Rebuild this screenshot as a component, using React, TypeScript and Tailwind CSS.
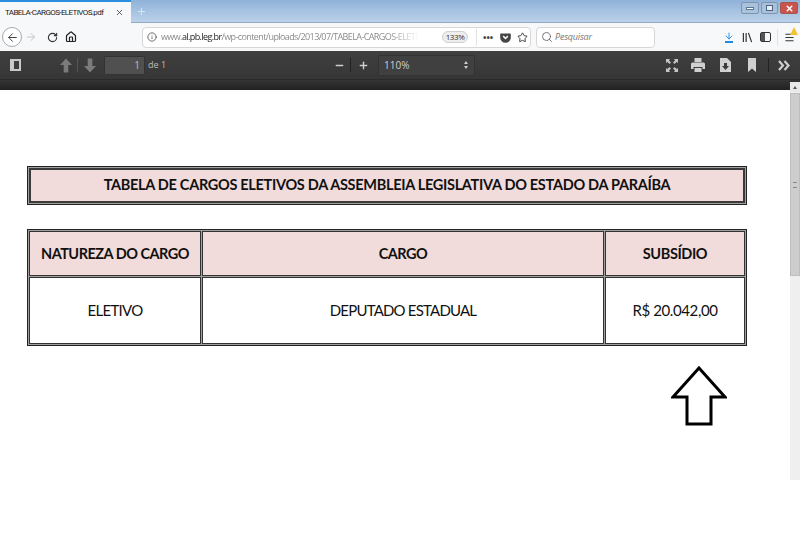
import { ArrowLeft, ArrowRight, RotateCw, Home, Info, Star, Search, Menu, Minus, Plus, X } from 'lucide-react';

const cellText = "font-['Lato','Liberation_Sans',sans-serif] text-[#111]";
const headCell = 'border border-[#333] bg-[#f2dcdb] flex items-center justify-center text-[14.5px] font-bold whitespace-nowrap';
const bodyCell = 'border border-[#333] bg-white flex items-center justify-center text-[15px] whitespace-nowrap';

function WindowButtons() {
  return (
    <div className="flex h-[12px] mt-[2px] gap-[2px]">
      <div className="w-[18px] rounded-[2px] flex items-center justify-center bg-[#a8c1dd] border border-[#7f93ab]">
        <div className="w-[8px] h-[3px] bg-white border border-[#5f7590]" />
      </div>
      <div className="w-[17px] rounded-[2px] flex items-center justify-center bg-[#a8c1dd] border border-[#7f93ab]">
        <div className="w-[7px] h-[6px] bg-white/70 border border-[#4f647d]" />
      </div>
      <div className="w-[18px] rounded-[2px] flex items-center justify-center bg-[#c9544c] border border-[#a9544c]">
        <X className="w-[9px] h-[9px] text-white" strokeWidth={4} />
      </div>
    </div>
  );
}

function TabStrip() {
  return (
    <div className="h-[23px] flex bg-gradient-to-b from-[#8fb2d8] to-[#bcd2ea] border-b border-[#93a9c2]">
      <div className="w-[131px] h-[23px] bg-[#f7f8fa] border-t-2 border-[#2a8fe0] flex items-center pl-[5px] pr-[7px] text-[#222]">
        <span className="font-['Roboto',sans-serif] text-[8px] tracking-[-0.6px] flex-1 whitespace-nowrap">TABELA-CARGOS-ELETIVOS.pdf</span>
        <X className="w-[9px] h-[9px] shrink-0 text-[#333]" strokeWidth={2} />
      </div>
      <div className="w-[20px] flex items-center justify-center">
        <Plus className="w-[11px] h-[11px] text-[#dbe7f3]" strokeWidth={2} />
      </div>
      <div className="flex-1" />
      <div className="pr-[2px]">
        <WindowButtons />
      </div>
    </div>
  );
}

function NavBar() {
  return (
    <div className="h-[28px] bg-[#f7f8fa] flex items-center font-['Open_Sans',sans-serif]">
      <div className="ml-[2px] w-[20px] h-[20px] rounded-full border border-[#a9a9a9] bg-white flex items-center justify-center">
        <ArrowLeft className="w-[13px] h-[13px] text-[#333]" strokeWidth={1.7} />
      </div>
      <ArrowRight className="ml-[3px] w-[12px] h-[12px] text-[#b5b5b5]" strokeWidth={1.5} />
      <RotateCw className="ml-[10px] w-[11px] h-[11px] text-[#333]" strokeWidth={2.4} />
      <Home className="ml-[7px] w-[12px] h-[12px] text-[#222]" strokeWidth={2.4} />
      <div className="ml-[65px] w-[389px] h-[21px] bg-white border border-[#d7d7d7] rounded-sm flex items-center pl-[4px]">
        <Info className="w-[10px] h-[10px] text-[#555]" />
        <span className="ml-[4px] w-[258px] overflow-hidden whitespace-nowrap text-[9px] tracking-[-0.6px] text-[#8a8a8a] [mask-image:linear-gradient(to_right,black_88%,transparent)]">
          www.<span className="text-[#222]">al.pb.leg.br</span>/wp-content/uploads/2013/07/TABELA-CARGOS-ELETIV
        </span>
        <span className="ml-[23px] w-[26px] h-[12px] rounded-full border border-[#cfcfcf] bg-[#eeeeee] text-[8px] tracking-[-0.4px] leading-[10px] text-center text-[#333]">133%</span>
        <div className="ml-[8px] w-px h-[17px] bg-[#e2e2e2]" />
        <span className="ml-[6px] text-[9px] leading-none font-bold text-[#444]">•••</span>
        <svg className="ml-[7px] w-[11px] h-[11px]" viewBox="0 0 12 12">
          <path d="M1 1.5h10a.8.8 0 0 1 .8.8V6a5.8 5.6 0 0 1-11.600 0V2.300a.8.8 0 0 1 .8-.8z" fill="#444" />
          <path d="M3.500 4.500L6 7l2.500-2.500" fill="none" stroke="#fff" strokeWidth="1.600" />
        </svg>
        <Star className="ml-[6px] w-[11px] h-[11px] text-[#333]" strokeWidth={2} />
      </div>
      <div className="ml-[5px] w-[119px] h-[21px] bg-white border border-[#d7d7d7] rounded-sm flex items-center pl-[4px]">
        <Search className="w-[12px] h-[12px] text-[#777]" />
        <span className="ml-[2px] text-[9px] tracking-[-0.2px] italic text-[#777]">Pesquisar</span>
      </div>
      <div className="ml-[69px] flex flex-col items-center w-[10px] text-[#1f8ade]">
        <ArrowRight className="w-[10px] h-[10px] rotate-90" strokeWidth={2.2} />
        <div className="w-[8px] h-[1.5px] bg-[#1f8ade]" />
      </div>
      <svg className="ml-[8px] w-[11px] h-[11px]" viewBox="0 0 12 12" fill="none" stroke="#333" strokeWidth="1.300">
        <path d="M1.500 1v10M4.500 1v10M7 1l3.500 10" />
      </svg>
      <div className="ml-[7px] w-[11px] h-[10px] rounded-[2px] border border-[#333] flex">
        <div className="w-[4px] bg-[#555]" />
      </div>
      <div className="ml-[6px] w-px h-[17px] bg-[#e2e2e2]" />
      <div className="relative ml-[6px]">
        <Menu className="w-[11px] h-[11px] text-[#333]" strokeWidth={2.4} />
        <svg className="absolute -top-[5px] left-[6px] w-[8px] h-[8px]" viewBox="0 0 8 8">
          <path d="M4 0l4 8H0z" fill="#f2c230" />
        </svg>
      </div>
    </div>
  );
}

function PdfToolbar() {
  const gray = 'text-[#d0d0d0]';
  return (
    <div className="h-[39px] flex flex-col shrink-0 font-['Open_Sans',sans-serif]">
      <div className="h-[29px] flex items-center bg-gradient-to-b from-[#404040] to-[#363636] border-b border-[#2a2a2a]">
        <div className="ml-[10px] w-[11px] h-[12px] border-2 border-[#c8c8c8] border-l-[4px]" />
        <svg className="ml-[39px] w-[12px] h-[15px]" viewBox="0 0 13 15"><path d="M6.500 0L13 7H9v8H4V7H0z" fill="#7b7b7b" /></svg>
        <div className="ml-[5px] w-px h-[14px] bg-[#555]" />
        <svg className="ml-[6px] w-[12px] h-[15px]" viewBox="0 0 13 15"><path d="M6.500 15L13 8H9V0H4v8H0z" fill="#7b7b7b" /></svg>
        <div className="ml-[8px] w-[41px] h-[19px] bg-[#505050] border border-[#333] rounded-[1px] flex items-center justify-end pr-[4px] text-[10px] text-[#bdbdbd]">1</div>
        <span className="ml-[3px] text-[9px] text-[#bdbdbd]">de 1</span>
        <Minus className={`ml-[168px] w-[11px] h-[11px] ${gray}`} strokeWidth={3} />
        <div className="ml-[5px] w-px h-[14px] bg-[#222]" />
        <Plus className={`ml-[7px] w-[11px] h-[11px] ${gray}`} strokeWidth={3} />
        <div className="ml-[9px] w-[97px] h-[21px] bg-[#404040] border border-[#333] rounded-[1px] flex items-center justify-between pl-[5px] pr-[6px] text-[10px] text-[#cfcfcf]">
          <span>110%</span>
          <span className="flex flex-col gap-[2px]">
            <span className="w-0 h-0 border-x-[2px] border-x-transparent border-b-[3px] border-b-[#ccc]" />
            <span className="w-0 h-0 border-x-[2px] border-x-transparent border-t-[3px] border-t-[#ccc]" />
          </span>
        </div>
        <div className="flex-1" />
        <svg className="w-[12px] h-[13px]" viewBox="0 0 12 13" fill="#c4c4c4">
          <path d="M0 0h4L3 1.500 5 3.500 3.500 5 1.500 3 0 4z" />
          <path d="M12 0H8l1 1.500-2 2L8.500 5l2-2L12 4z" />
          <path d="M0 13H4L3 11.500 5 9.500 3.500 8l-2 2L0 9z" />
          <path d="M12 13H8l1-1.500-2-2L8.500 8l2 2L12 9z" />
        </svg>
        <svg className="ml-[13px] w-[14px] h-[14px]" viewBox="0 0 14 14">
          <path d="M3.500 0h7v4h-7z" fill="#d0d0d0" />
          <path d="M1.500 4.500h11A1.500 1.500 0 0 1 14 6v5h-2.500V9h-9v2H0V6a1.500 1.500 0 0 1 1.500-1.500z" fill="#d0d0d0" />
          <path d="M3.500 10h7v4h-7z" fill="#d0d0d0" />
        </svg>
        <svg className="ml-[15px] w-[11px] h-[14px]" viewBox="0 0 11 14">
          <path d="M0 0h7l4 4v10H0z" fill="#d0d0d0" />
          <path d="M4 5h3v3h2l-3.500 4L2 8h2z" fill="#3a3a3a" />
        </svg>
        <svg className="ml-[17px] w-[8px] h-[14px]" viewBox="0 0 8 14"><path d="M0 0h8v14L4 10.500 0 14z" fill="#d0d0d0" /></svg>
        <div className="ml-[12px] w-px h-[14px] bg-[#222]" />
        <svg className="ml-[9px] mr-[10px] w-[12px] h-[11px]" viewBox="0 0 12 11" fill="none" stroke="#d0d0d0" strokeWidth="2.200">
          <path d="M1 1l4 4.500L1 10M6.500 1l4 4.500-4 4.500" />
        </svg>
      </div>
      <div className="flex-1 bg-gradient-to-b from-[#343434] to-[#222222]" />
    </div>
  );
}

function Scrollbar() {
  return (
    <div className="w-[10px] h-[398px] -mt-[8px] relative shrink-0 bg-[#efefef] flex flex-col">
      <div className="h-[10px] bg-[#e8e8e8] flex items-center justify-center">
        <span className="w-0 h-0 border-x-[2px] border-x-transparent border-b-[3px] border-b-[#555]" />
      </div>
      <div className="mt-px h-[183px] bg-[#cdcdcd] border border-[#bdbdbd] flex items-center justify-center">
        <div className="w-[4px] h-[6px] border-y border-[#888]" />
      </div>
    </div>
  );
}

export default function App() {
  return (
    <div className="w-[800px] h-[533px] flex flex-col bg-white overflow-hidden">
      <TabStrip />
      <NavBar />
      <PdfToolbar />
      <div className="flex-1 flex min-h-0">
        <div className="flex-1 pl-[27px] pt-[76px]">
          <div className={`w-[720px] h-[39px] border border-[#222] bg-[#a0a0a0] p-px ${cellText}`}>
            <div className="h-full border-2 border-[#3a3a3a] bg-[#f2dcdb] flex items-center justify-center">
              <span className="text-[14.5px] font-bold tracking-[-0.3px] whitespace-nowrap -mt-px">TABELA DE CARGOS ELETIVOS DA ASSEMBLEIA LEGISLATIVA DO ESTADO DA PARAÍBA</span>
            </div>
          </div>
          <div className={`mt-[24px] w-[720px] h-[117px] border border-[#222] bg-[#a0a0a0] p-px grid grid-cols-[172px_402px_140px] grid-rows-[45px_67px] gap-px ${cellText}`}>
            <div className={`${headCell} tracking-[-0.5px]`}>NATUREZA DO CARGO</div>
            <div className={`${headCell} tracking-[-0.5px]`}>CARGO</div>
            <div className={`${headCell} tracking-[-0.4px]`}>SUBSÍDIO</div>
            <div className={`${bodyCell} tracking-[-0.7px]`}>ELETIVO</div>
            <div className={`${bodyCell} tracking-[-0.8px]`}>DEPUTADO ESTADUAL</div>
            <div className={`${bodyCell} tracking-[-0.4px]`}>R$ 20.042,00</div>
          </div>
          <svg className="ml-[644px] mt-[20px] w-[56px] h-[62px]" viewBox="0 0 56 62">
            <path d="M28 2L54 31H40V58H16V31H2z" fill="#fff" stroke="#000" strokeWidth="3" strokeLinejoin="miter" />
          </svg>
        </div>
        <Scrollbar />
      </div>
    </div>
  );
}
